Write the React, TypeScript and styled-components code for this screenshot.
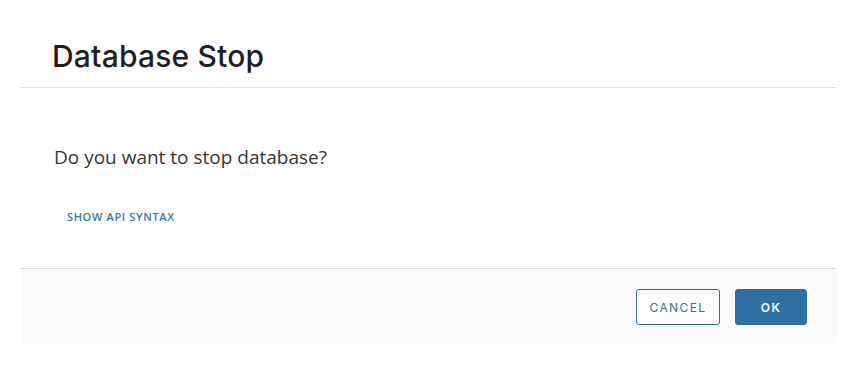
import React from "react";
import styled, { createGlobalStyle } from "styled-components";

const Global = createGlobalStyle`
  html, body { margin: 0; padding: 0; background: #ffffff; }
  body { font-family: "Open Sans", "Noto Sans", sans-serif; }
`;

const Page = styled.div`
  padding: 0 22px 0 21px;
  height: 367px;
  box-sizing: border-box;
`;

const Dialog = styled.div`
  width: 816px;
  display: flex;
  flex-direction: column;
`;

const Header = styled.div`
  height: 88px;
  box-sizing: border-box;
  padding: 37px 0 0 31px;
  border-bottom: 1px solid #dce3e9;
`;

const Title = styled.h1`
  margin: 0;
  font-family: "Inter", "Lato", sans-serif;
  font-size: 30px;
  font-weight: 500;
  line-height: 38px;
  color: #1f1f1f;
  letter-spacing: 0.2px;
`;

const Body = styled.div`
  height: 180px;
  box-sizing: border-box;
  padding: 57px 0 0 33px;
  display: flex;
  flex-direction: column;
  align-items: flex-start;
`;

const Message = styled.p`
  margin: 0;
  font-size: 19px;
  line-height: 24px;
  color: #363636;
`;

const LinkButton = styled.button`
  margin: 40px 0 0 9px;
  padding: 0 4px;
  border: none;
  background: none;
  font-family: "Open Sans", sans-serif;
  font-size: 11px;
  font-weight: 600;
  letter-spacing: 0.65px;
  text-transform: uppercase;
  color: #3a76a8;
  line-height: 16px;
  cursor: pointer;
`;

const Footer = styled.div`
  height: 76px;
  box-sizing: border-box;
  border-top: 1px solid #dddddd;
  background: #fafafa;
  border-radius: 0 0 3px 3px;
  display: flex;
  justify-content: flex-end;
  align-items: flex-start;
  gap: 15px;
  padding: 20px 30px 0 0;
`;

const Button = styled.button<{ $primary?: boolean }>`
  height: 36px;
  min-width: ${(p) => (p.$primary ? "72px" : "84px")};
  box-sizing: border-box;
  padding: 0 12px;
  border-radius: 3px;
  border: 1px solid #2f6fa2;
  background: ${(p) => (p.$primary ? "#2f6fa2" : "#ffffff")};
  color: ${(p) => (p.$primary ? "#ffffff" : "#2f6fa2")};
  font-family: "Inter", "Lato", sans-serif;
  font-size: 12px;
  font-weight: ${(p) => (p.$primary ? 600 : 400)};
  letter-spacing: 1.4px;
  text-transform: uppercase;
  cursor: pointer;
`;

export default function App() {
  return (
    <>
      <Global />
      <Page>
        <Dialog>
          <Header>
            <Title>Database Stop</Title>
          </Header>
          <Body>
            <Message>Do you want to stop database?</Message>
            <LinkButton>Show API Syntax</LinkButton>
          </Body>
          <Footer>
            <Button>Cancel</Button>
            <Button $primary>OK</Button>
          </Footer>
        </Dialog>
      </Page>
    </>
  );
}
